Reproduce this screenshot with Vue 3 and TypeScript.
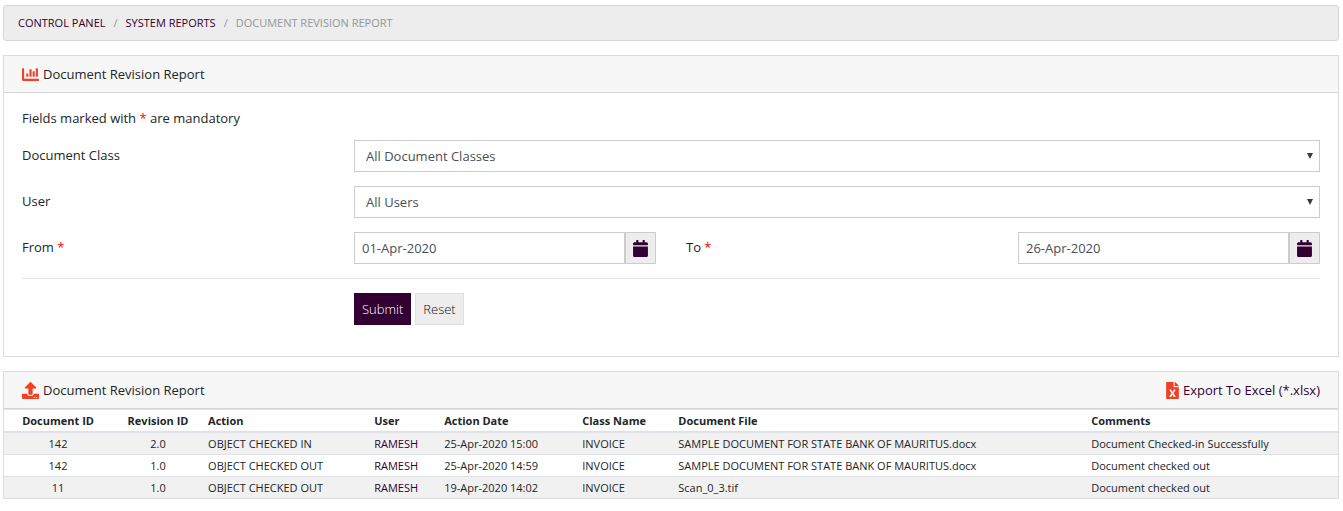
<script setup lang="ts">
import { ref } from 'vue'

interface Revision {
  documentId: string
  revisionId: string
  action: string
  user: string
  date: string
  className: string
  file: string
  comments: string
}

const documentClass = ref('All Document Classes')
const user = ref('All Users')
const fromDate = ref('01-Apr-2020')
const toDate = ref('26-Apr-2020')

const sampleFile = 'SAMPLE DOCUMENT FOR STATE BANK OF MAURITUS.docx'
const revisions: Revision[] = [
  { documentId: '142', revisionId: '2.0', action: 'OBJECT CHECKED IN', user: 'RAMESH', date: '25-Apr-2020 15:00', className: 'INVOICE', file: sampleFile, comments: 'Document Checked-in Successfully' },
  { documentId: '142', revisionId: '1.0', action: 'OBJECT CHECKED OUT', user: 'RAMESH', date: '25-Apr-2020 14:59', className: 'INVOICE', file: sampleFile, comments: 'Document checked out' },
  { documentId: '11', revisionId: '1.0', action: 'OBJECT CHECKED OUT', user: 'RAMESH', date: '19-Apr-2020 14:02', className: 'INVOICE', file: 'Scan_0_3.tif', comments: 'Document checked out' },
]

const calendarPath =
  'M12 192h424c6.6 0 12 5.4 12 12v260c0 26.5-21.5 48-48 48H48c-26.5 0-48-21.5-48-48V204c0-6.6 5.4-12 12-12zm436-44v-36c0-26.5-21.5-48-48-48h-48V12c0-6.6-5.4-12-12-12h-40c-6.6 0-12 5.4-12 12v52H160V12c0-6.6-5.4-12-12-12h-40c-6.6 0-12 5.4-12 12v52H48C21.5 64 0 85.5 0 112v36c0 6.6 5.4 12 12 12h424c6.6 0 12-5.4 12-12z'
</script>

<template>
  <div class="page">
    <nav aria-label="Breadcrumb">
      <ol class="breadcrumb">
        <li><a href="#">CONTROL PANEL</a></li>
        <li><a href="#">SYSTEM REPORTS</a></li>
        <li>DOCUMENT REVISION REPORT</li>
      </ol>
    </nav>

    <section class="card">
      <header class="card-header">
        <span class="title">
          <svg class="icon" viewBox="0 0 512 512" width="17" height="17" aria-hidden="true">
            <path d="M332.8 320h38.4c6.4 0 12.8-6.4 12.8-12.8V172.8c0-6.4-6.4-12.8-12.8-12.8h-38.4c-6.4 0-12.8 6.4-12.8 12.8v134.4c0 6.4 6.4 12.8 12.8 12.8zm96 0h38.4c6.4 0 12.8-6.4 12.8-12.8V76.8c0-6.4-6.4-12.8-12.8-12.8h-38.4c-6.4 0-12.8 6.4-12.8 12.8v230.4c0 6.4 6.4 12.8 12.8 12.8zm-288 0h38.4c6.4 0 12.8-6.4 12.8-12.8v-70.4c0-6.4-6.4-12.8-12.8-12.8h-38.4c-6.4 0-12.8 6.4-12.8 12.8v70.4c0 6.4 6.4 12.8 12.8 12.8zm96 0h38.4c6.4 0 12.8-6.4 12.8-12.8V108.8c0-6.4-6.4-12.8-12.8-12.8h-38.4c-6.4 0-12.8 6.4-12.8 12.8v198.4c0 6.4 6.4 12.8 12.8 12.8zM496 384H64V80c0-8.84-7.16-16-16-16H16C7.16 64 0 71.16 0 80v336c0 17.67 14.33 32 32 32h464c8.84 0 16-7.16 16-16v-32c0-8.84-7.16-16-16-16z" />
          </svg>
          Document Revision Report
        </span>
      </header>
      <form class="card-body" @submit.prevent>
        <p class="note">Fields marked with <span class="req">*</span> are mandatory</p>
        <div class="grid">
          <label for="doc-class">Document Class</label>
          <div class="select-wrap">
            <select id="doc-class" v-model="documentClass" class="control">
              <option>All Document Classes</option>
            </select>
            <svg class="caret" viewBox="0 0 6 6" width="6" height="6" aria-hidden="true"><path d="M0 0h6L3 6z" /></svg>
          </div>

          <label for="user">User</label>
          <div class="select-wrap">
            <select id="user" v-model="user" class="control">
              <option>All Users</option>
            </select>
            <svg class="caret" viewBox="0 0 6 6" width="6" height="6" aria-hidden="true"><path d="M0 0h6L3 6z" /></svg>
          </div>

          <label for="from">From <span class="req">*</span></label>
          <div class="date">
            <input id="from" v-model="fromDate" type="text" class="control" />
            <button type="button" class="addon" aria-label="Choose from date">
              <svg viewBox="0 0 448 512" width="15" height="17" aria-hidden="true"><path :d="calendarPath" /></svg>
            </button>
          </div>
          <label for="to">To <span class="req">*</span></label>
          <div class="date">
            <input id="to" v-model="toDate" type="text" class="control" />
            <button type="button" class="addon" aria-label="Choose to date">
              <svg viewBox="0 0 448 512" width="15" height="17" aria-hidden="true"><path :d="calendarPath" /></svg>
            </button>
          </div>

          <hr />

          <div class="actions">
            <button type="submit" class="btn primary">Submit</button>
            <button type="reset" class="btn">Reset</button>
          </div>
        </div>
      </form>
    </section>

    <section class="card">
      <header class="card-header">
        <span class="title">
          <svg class="icon" viewBox="0 0 512 512" width="17" height="17" aria-hidden="true">
            <path d="M296 384h-80c-13.3 0-24-10.7-24-24V192h-87.7c-17.8 0-26.7-21.5-14.1-34.1L242.3 5.7c7.5-7.5 19.8-7.5 27.3 0l152.2 152.2c12.6 12.6 3.7 34.1-14.1 34.1H320v168c0 13.3-10.7 24-24 24zm216-8v112c0 13.3-10.7 24-24 24H24c-13.3 0-24-10.7-24-24V376c0-13.3 10.7-24 24-24h136v8c0 30.9 25.1 56 56 56h80c30.9 0 56-25.1 56-56v-8h136c13.3 0 24 10.7 24 24zm-124 88c0-11-9-20-20-20s-20 9-20 20 9 20 20 20 20-9 20-20zm64 0c0-11-9-20-20-20s-20 9-20 20 9 20 20 20 20-9 20-20z" />
          </svg>
          Document Revision Report
        </span>
        <a href="#" class="title">
          <svg class="icon" viewBox="0 0 384 512" width="13" height="17" aria-hidden="true">
            <path d="M224 136V0H24C10.7 0 0 10.7 0 24v464c0 13.3 10.7 24 24 24h336c13.3 0 24-10.7 24-24V160H248c-13.2 0-24-10.8-24-24zm60.1 106.5L224 336l60.1 93.5c5.1 8-.6 18.5-10.1 18.5h-34.9c-4.4 0-8.5-2.4-10.6-6.3C208.9 405.5 192 373 192 373c-6.4 14.8-10 20-36.6 68.8-2.1 3.9-6.1 6.3-10.5 6.3H110c-9.5 0-15.2-10.5-10.1-18.5l60.3-93.5-60.3-93.5c-5.2-8 .6-18.5 10.1-18.5h34.8c4.4 0 8.5 2.4 10.6 6.3 26.1 48.8 20 33.6 36.6 68.5 0 0 6.1-11.7 36.6-68.5 2.1-3.9 6.2-6.3 10.6-6.3H274c9.5-.1 15.2 10.4 10.1 18.4zM384 121.9v6.1H256V0h6.1c6.4 0 12.5 2.5 17 7l97.9 98c4.5 4.5 7 10.6 7 16.9z" />
          </svg>
          Export To Excel (*.xlsx)
        </a>
      </header>
      <table>
        <colgroup>
          <col class="c-doc" />
          <col class="c-rev" />
          <col class="c-action" />
          <col class="c-user" />
          <col class="c-date" />
          <col class="c-class" />
          <col class="c-file" />
          <col />
        </colgroup>
        <thead>
          <tr>
            <th class="center">Document ID</th>
            <th class="center">Revision ID</th>
            <th>Action</th>
            <th>User</th>
            <th>Action Date</th>
            <th>Class Name</th>
            <th>Document File</th>
            <th>Comments</th>
          </tr>
        </thead>
        <tbody>
          <tr v-for="(r, i) in revisions" :key="i">
            <td class="center">{{ r.documentId }}</td>
            <td class="center">{{ r.revisionId }}</td>
            <td>{{ r.action }}</td>
            <td><a href="#">{{ r.user }}</a></td>
            <td>{{ r.date }}</td>
            <td>{{ r.className }}</td>
            <td>{{ r.file }}</td>
            <td>{{ r.comments }}</td>
          </tr>
        </tbody>
      </table>
    </section>
  </div>
</template>

<style>
body {
  background: #fff;
}
</style>

<style scoped>
.page {
  padding: 5px 4px 12px 3px;
  font-family: "Open Sans", sans-serif;
  font-size: 13px;
  line-height: 20px;
  color: #212529;
}

.page *,
.page {
  box-sizing: border-box;
}

a {
  color: #330033;
  text-decoration: none;
}

.breadcrumb {
  display: flex;
  margin: 0 0 14px;
  padding: 8px 14px;
  list-style: none;
  font-size: 11px;
  line-height: 18px;
  background: #ededed;
  border: 1px solid #d6d6d6;
  border-radius: 3px;
  color: #92979b;
}

.breadcrumb li + li::before {
  content: "/";
  padding: 0 8px;
}

.card {
  margin-bottom: 14px;
  border: 1px solid #dcdcdc;
}

.card-header {
  display: flex;
  justify-content: space-between;
  padding: 8px 18px;
  background: #f7f7f7;
  border-bottom: 1px solid #d6d6d6;
}

.title {
  display: flex;
  align-items: center;
  gap: 4px;
}

.icon {
  fill: #f04124;
}

.card-body {
  padding: 15px 18px 31px;
}

.note {
  margin: 0 0 12px;
}

.req {
  color: #f00;
}

.grid {
  display: grid;
  grid-template-columns: repeat(4, minmax(0, 1fr));
  gap: 14px 30px;
}

label {
  padding-top: 5px;
}

.select-wrap {
  position: relative;
  grid-column: span 3;
}

.control {
  display: block;
  width: 100%;
  height: 32px;
  margin: 0;
  padding: 0 7px;
  font: inherit;
  color: #495057;
  background: #fff;
  border: 1px solid #ccc;
  border-radius: 0;
  appearance: none;
}

select.control {
  padding: 0 11px;
}

.caret {
  position: absolute;
  top: 13px;
  right: 7px;
  fill: #343a40;
  pointer-events: none;
}

.date {
  display: flex;
}

.date .control {
  flex: 1;
  min-width: 0;
}

.addon {
  display: flex;
  align-items: center;
  justify-content: center;
  width: 31px;
  padding: 0;
  background: #ededed;
  border: 1px solid #ccc;
}

.addon svg {
  fill: #330033;
}

hr {
  grid-column: 1 / -1;
  width: 100%;
  margin: 0;
  border: 0;
  border-top: 1px solid #e5e5e5;
}

.actions {
  grid-column: 2 / -1;
  display: flex;
  gap: 4px;
}

.btn {
  height: 32px;
  padding: 0 7px;
  font: inherit;
  font-weight: 300;
  color: #111;
  background: #ededed;
  border: 1px solid #e0e0e0;
}

.btn.primary {
  color: #fff;
  background: #330033;
  border-color: #330033;
}

table {
  width: 100%;
  table-layout: fixed;
  border-collapse: separate;
  border-spacing: 0;
  font-size: 11px;
  line-height: 17px;
}

th,
td {
  padding: 2px 4px;
  text-align: left;
  white-space: nowrap;
}

th {
  border-top: 1px solid #dee2e6;
  border-bottom: 2px solid #dee2e6;
}

tbody tr + tr td {
  border-top: 1px solid #dee2e6;
}

tbody tr:nth-child(odd) {
  background: #f1f1f1;
}

.center {
  text-align: center;
}

.c-doc { width: 8.1%; }
.c-rev { width: 6.9%; }
.c-action { width: 12.45%; }
.c-user { width: 5.25%; }
.c-date { width: 10.35%; }
.c-class { width: 7.2%; }
.c-file { width: 30.95%; }
</style>
